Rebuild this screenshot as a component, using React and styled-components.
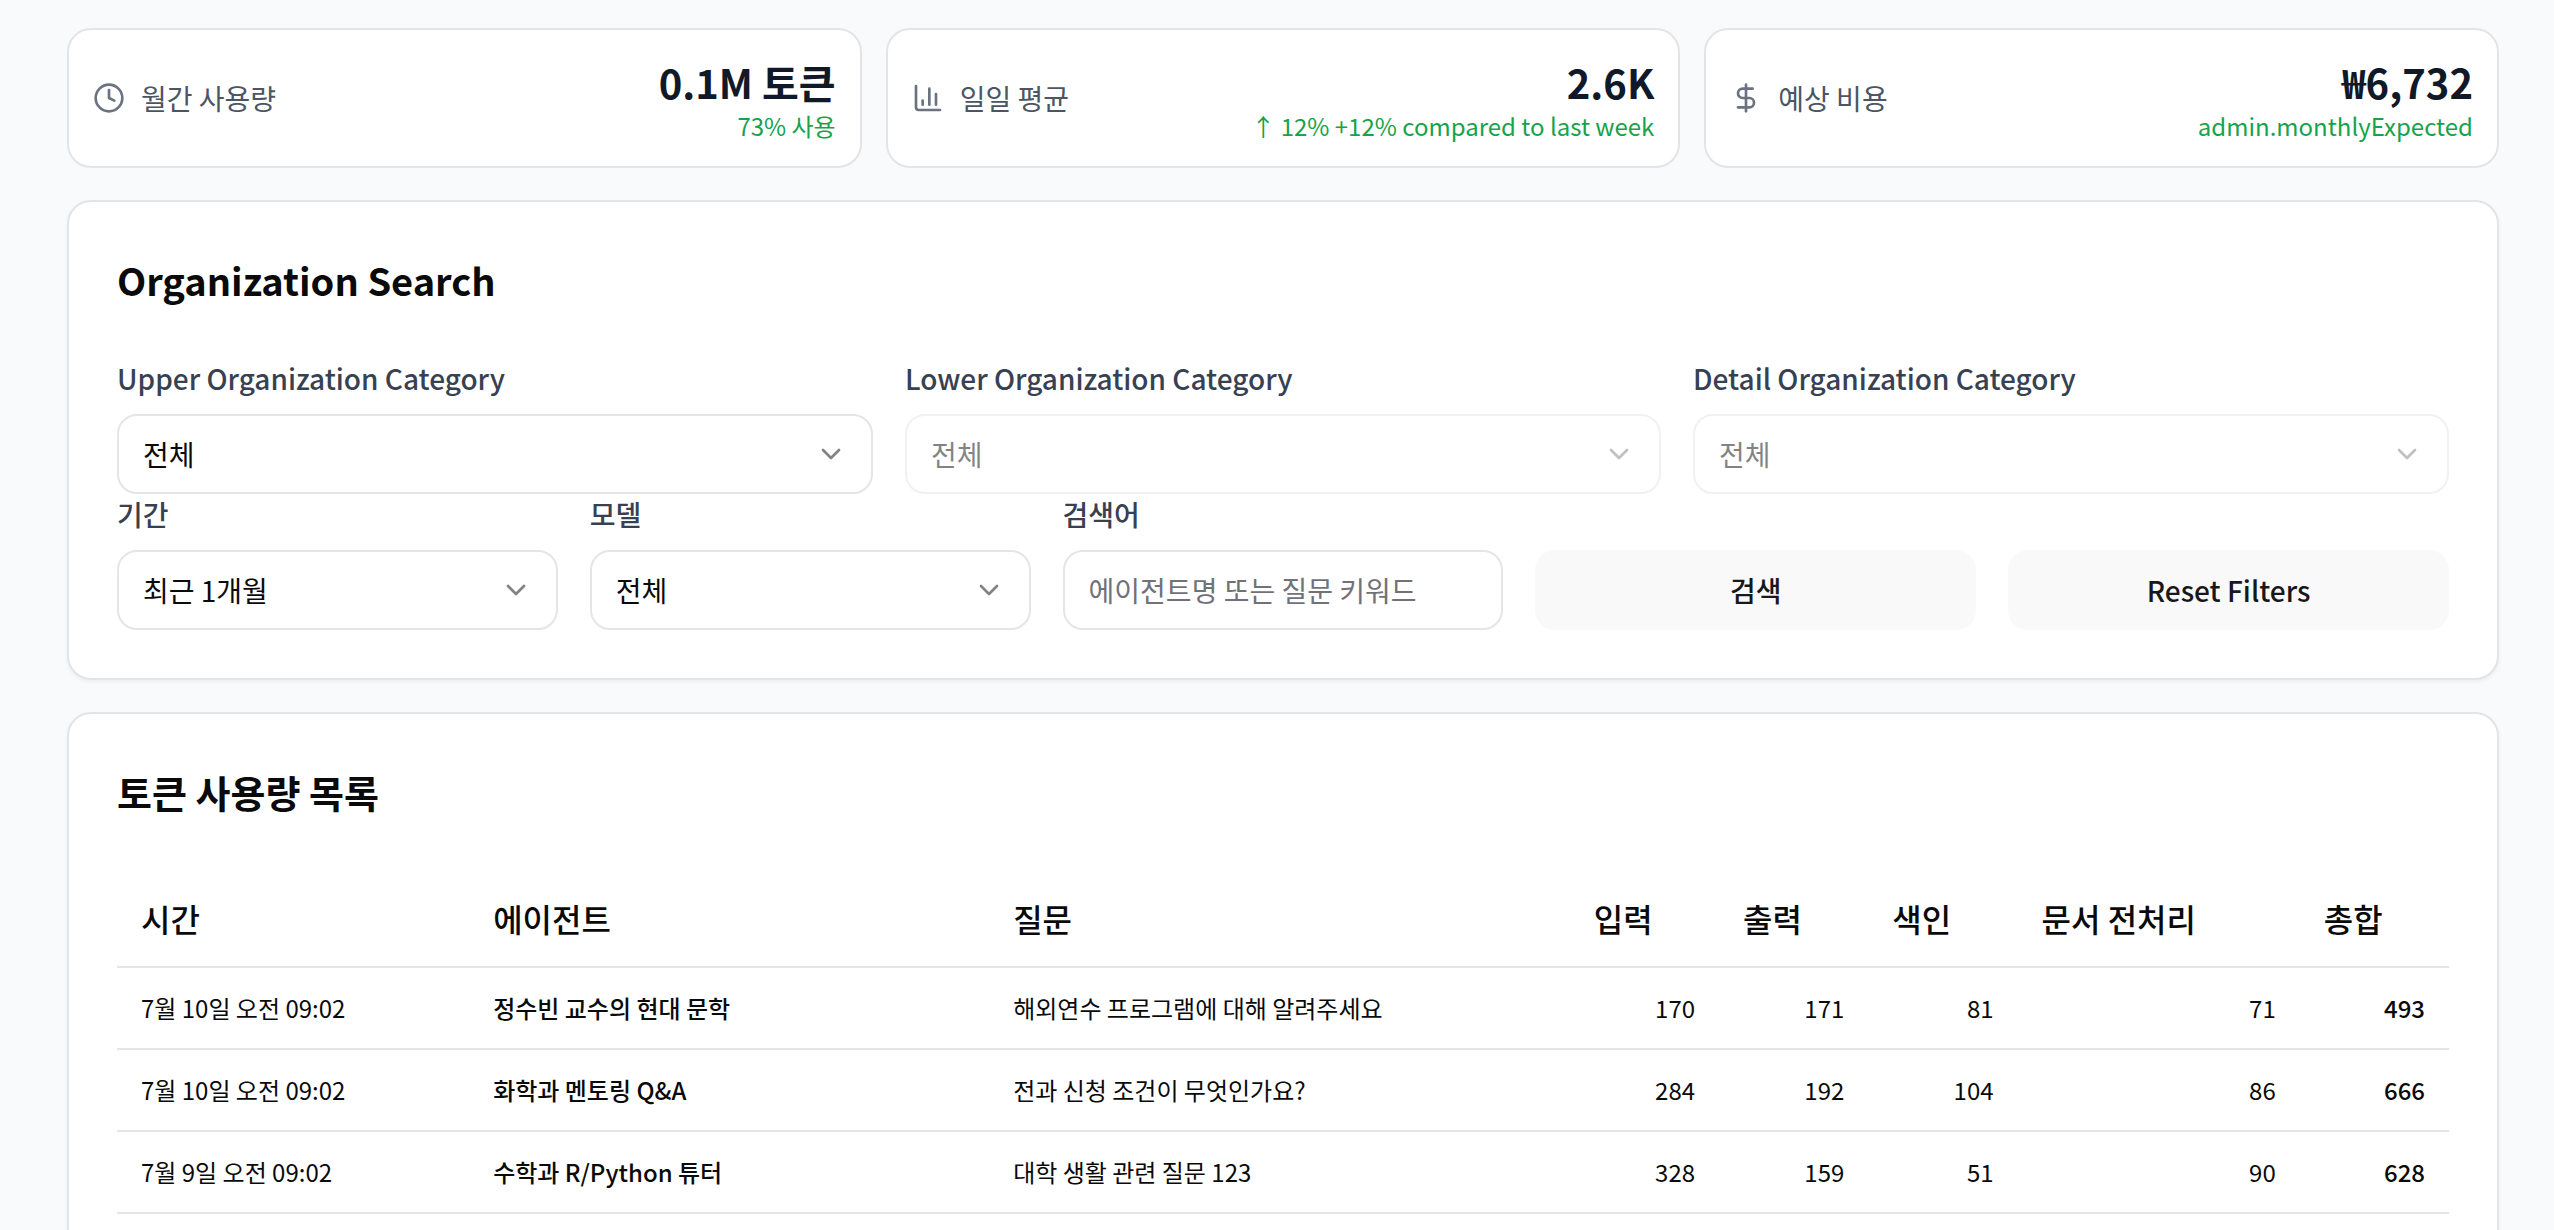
import React, { useState } from "react";
import styled, { createGlobalStyle } from "styled-components";
import { ChartColumn, ChevronDown, Clock, DollarSign } from "lucide-react";

const GlobalStyle = createGlobalStyle`
  *, *::before, *::after { box-sizing: border-box; }
  body {
    margin: 0;
    background: #f8fafc;
    color: #0a0a0a;
    font-family: "Noto Sans CJK KR", "Noto Sans", sans-serif;
    font-size: 28px;
    line-height: 40px;
  }
  button, input, select { font: inherit; color: inherit; margin: 0; }
`;

const Page = styled.main`
  display: flex;
  flex-direction: column;
  gap: 32px;
  padding: 28px 55px 28px 67px;
`;

const StatGrid = styled.section`
  display: grid;
  grid-template-columns: repeat(3, minmax(0, 1fr));
  gap: 24px;
`;

const StatCard = styled.article`
  display: flex;
  align-items: center;
  justify-content: space-between;
  padding: 24px;
  background: #fff;
  border: 2px solid #e4e4e7;
  border-radius: 24px;
`;

const StatName = styled.div`
  display: flex;
  align-items: center;
  gap: 16px;
  color: #4b5563;
  svg { color: #6b7280; }
`;

const StatFigures = styled.div`
  text-align: right;
`;

const StatValue = styled.div`
  font-size: 40px;
  font-weight: 700;
  line-height: 56px;
  color: #111827;
`;

const StatNote = styled.div`
  font-size: 24px;
  line-height: 32px;
  color: #16a34a;
`;

const Panel = styled.section`
  padding: 48px;
  background: #fff;
  border: 2px solid #e4e4e7;
  border-radius: 24px;
  box-shadow: 0 2px 4px rgba(0, 0, 0, 0.05);
`;

const PanelTitle = styled.h2`
  margin: 0 0 ${(p) => p.$gap}px;
  font-size: 38px;
  font-weight: 700;
  line-height: 60px;
`;

const FieldGrid = styled.div`
  display: grid;
  grid-template-columns: repeat(${(p) => p.$columns}, minmax(0, 1fr));
  gap: 32px;
  align-items: end;
`;

const Field = styled.div`
  display: flex;
  flex-direction: column;
  gap: 16px;
`;

const FieldLabel = styled.label`
  font-weight: 500;
  line-height: 40px;
  color: #374151;
`;

const SelectBox = styled.div`
  position: relative;
  opacity: ${(p) => (p.$disabled ? 0.5 : 1)};
  svg {
    position: absolute;
    top: 24px;
    right: 26px;
    opacity: 0.5;
    pointer-events: none;
  }
`;

const controlShape = `
  display: block;
  width: 100%;
  height: 80px;
  padding: 0 24px;
  background: #fff;
  border: 2px solid #e5e5e5;
  border-radius: 20px;
`;

const Select = styled.select`
  ${controlShape}
  appearance: none;
  &:disabled { color: inherit; opacity: 1; }
`;

const TextInput = styled.input`
  ${controlShape}
  &::placeholder { color: #71717a; opacity: 1; }
`;

const Button = styled.button`
  height: 80px;
  border: 0;
  border-radius: 20px;
  background: #f9f9f9;
  color: #18181b;
  font-weight: 500;
`;

const Table = styled.table`
  width: 100%;
  table-layout: fixed;
  border-collapse: separate;
  border-spacing: 0;
`;

const Col = styled.col`
  width: ${(p) => p.$share}%;
`;

const HeadCell = styled.th`
  height: 94px;
  padding: 0 24px 4px;
  border-bottom: 2px solid #e5e5e5;
  font-size: 32px;
  font-weight: 500;
  text-align: left;
  white-space: nowrap;
`;

const Cell = styled.td`
  padding: 20px 24px;
  border-bottom: 2px solid #e5e5e5;
  font-size: 24px;
  font-weight: ${(p) => (p.$strong ? 500 : 400)};
  text-align: ${(p) => (p.$numeric ? "right" : "left")};
  white-space: nowrap;
`;

const stats = [
  { icon: Clock, name: "월간 사용량", value: "0.1M 토큰", note: "73% 사용" },
  { icon: ChartColumn, name: "일일 평균", value: "2.6K", note: "↑ 12% +12% compared to last week" },
  { icon: DollarSign, name: "예상 비용", value: "₩6,732", note: "admin.monthlyExpected" },
];

const columns = [
  { name: "시간", share: 15.1 },
  { name: "에이전트", share: 22.3, strong: true },
  { name: "질문", share: 24.9 },
  { name: "입력", share: 6.4, numeric: true },
  { name: "출력", share: 6.4, numeric: true },
  { name: "색인", share: 6.4, numeric: true },
  { name: "문서 전처리", share: 12.1, numeric: true },
  { name: "총합", share: 6.4, numeric: true, strong: true },
];

const usage = [
  ["7월 10일 오전 09:02", "정수빈 교수의 현대 문학", "해외연수 프로그램에 대해 알려주세요", 170, 171, 81, 71, 493],
  ["7월 10일 오전 09:02", "화학과 멘토링 Q&A", "전과 신청 조건이 무엇인가요?", 284, 192, 104, 86, 666],
  ["7월 9일 오전 09:02", "수학과 R/Python 튜터", "대학 생활 관련 질문 123", 328, 159, 51, 90, 628],
];

function SelectField({ id, label, option, disabled = false }) {
  return (
    <Field>
      <FieldLabel htmlFor={id}>{label}</FieldLabel>
      <SelectBox $disabled={disabled}>
        <Select id={id} disabled={disabled}>
          <option>{option}</option>
        </Select>
        <ChevronDown size={32} aria-hidden="true" />
      </SelectBox>
    </Field>
  );
}

export default function App() {
  const [keyword, setKeyword] = useState("");

  return (
    <>
      <GlobalStyle />
      <Page>
        <StatGrid>
          {stats.map(({ icon: Icon, name, value, note }) => (
            <StatCard key={name}>
              <StatName>
                <Icon size={32} aria-hidden="true" />
                <span>{name}</span>
              </StatName>
              <StatFigures>
                <StatValue>{value}</StatValue>
                <StatNote>{note}</StatNote>
              </StatFigures>
            </StatCard>
          ))}
        </StatGrid>

        <Panel>
          <PanelTitle $gap={48}>Organization Search</PanelTitle>
          <FieldGrid $columns={3}>
            <SelectField id="upper" label="Upper Organization Category" option="전체" />
            <SelectField id="lower" label="Lower Organization Category" option="전체" disabled />
            <SelectField id="detail" label="Detail Organization Category" option="전체" disabled />
          </FieldGrid>
          <FieldGrid $columns={5}>
            <SelectField id="period" label="기간" option="최근 1개월" />
            <SelectField id="model" label="모델" option="전체" />
            <Field>
              <FieldLabel htmlFor="keyword">검색어</FieldLabel>
              <TextInput
                id="keyword"
                type="text"
                placeholder="에이전트명 또는 질문 키워드"
                value={keyword}
                onChange={(e) => setKeyword(e.target.value)}
              />
            </Field>
            <Button type="button">검색</Button>
            <Button type="button" onClick={() => setKeyword("")}>Reset Filters</Button>
          </FieldGrid>
        </Panel>

        <Panel>
          <PanelTitle $gap={52}>토큰 사용량 목록</PanelTitle>
          <Table>
            <colgroup>
              {columns.map(({ name, share }) => (
                <Col key={name} $share={share} />
              ))}
            </colgroup>
            <thead>
              <tr>
                {columns.map(({ name }) => (
                  <HeadCell key={name} scope="col">{name}</HeadCell>
                ))}
              </tr>
            </thead>
            <tbody>
              {usage.map((row, r) => (
                <tr key={r}>
                  {row.map((value, c) => (
                    <Cell key={c} $numeric={columns[c].numeric} $strong={columns[c].strong}>
                      {value}
                    </Cell>
                  ))}
                </tr>
              ))}
            </tbody>
          </Table>
        </Panel>
      </Page>
    </>
  );
}
